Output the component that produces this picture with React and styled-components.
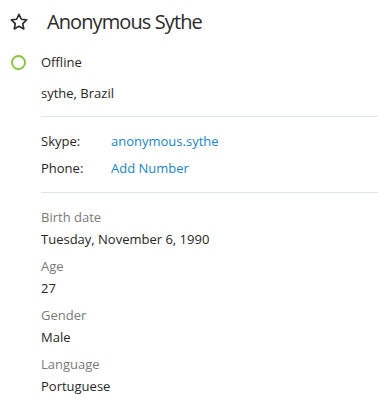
import React from 'react';
import styled, { createGlobalStyle } from 'styled-components';

const GlobalStyle = createGlobalStyle`
  body {
    margin: 0;
    background: #fff;
    font-family: "Open Sans", "Noto Sans", sans-serif;
    color: #262626;
  }
`;

const Panel = styled.div`
  width: 378px;
  height: 418px;
  background: #fff;
  overflow: hidden;
`;

const Header = styled.div`
  display: flex;
  align-items: center;
  height: 44px;
  padding-left: 9px;
`;

const Title = styled.h1`
  margin: 0 0 0 18px;
  font-size: 20px;
  font-weight: 400;
  letter-spacing: -0.9px;
  color: #2b2b2b;
  line-height: 44px;
`;

const StatusRow = styled.div`
  display: flex;
  align-items: center;
  height: 20px;
  margin-top: 8px;
  padding-left: 11px;
`;

const StatusDot = styled.span`
  width: 11px;
  height: 11px;
  border: 2px solid #8cc63f;
  border-radius: 50%;
  margin-right: 15px;
`;

const Body = styled.div`
  padding-left: 41px;
`;

const Text = styled.div`
  font-size: 13px;
  line-height: 20px;
  color: ${p => (p.$muted ? '#7a7a7a' : '#262626')};
  margin-top: ${p => p.$top || 0}px;
`;

const Divider = styled.hr`
  border: none;
  border-top: 1px solid #dbe5ee;
  margin: ${p => p.$top}px 0 0;
`;

const ContactList = styled.div`
  display: grid;
  grid-template-columns: 70px 1fr;
  row-gap: 7px;
  margin-top: 14px;
  font-size: 13px;
  line-height: 20px;
`;

const Link = styled.a`
  color: #1a86c8;
  text-decoration: none;
`;

const Facts = styled.div`
  margin-top: 14px;
  display: flex;
  flex-direction: column;
  gap: 7px;
`;

const Fact = styled.div`
  display: flex;
  flex-direction: column;
  gap: 2px;
`;

function StarIcon() {
  return (
    <svg width="20" height="20" viewBox="0 0 24 24" fill="none" stroke="#2b2b2b" strokeWidth="2" strokeLinejoin="round">
      <path d="M12 2.8l2.8 5.9 6.4.8-4.7 4.4 1.2 6.4L12 17.2l-5.7 3.1 1.2-6.4-4.7-4.4 6.4-.8z" />
    </svg>
  );
}

const facts = [
  ['Birth date', 'Tuesday, November 6, 1990'],
  ['Age', '27'],
  ['Gender', 'Male'],
  ['Language', 'Portuguese'],
];

export default function App() {
  return (
    <Panel>
      <GlobalStyle />
      <Header>
        <StarIcon />
        <Title>Anonymous Sythe</Title>
      </Header>
      <StatusRow>
        <StatusDot />
        <Text>Offline</Text>
      </StatusRow>
      <Body>
        <Text $top={11}>sythe, Brazil</Text>
        <Divider $top={13} />
        <ContactList>
          <span>Skype:</span>
          <Link href="#">anonymous.sythe</Link>
          <span>Phone:</span>
          <Link href="#">Add Number</Link>
        </ContactList>
        <Divider $top={14} />
        <Facts>
          {facts.map(([label, value]) => (
            <Fact key={label}>
              <Text $muted>{label}</Text>
              <Text>{value}</Text>
            </Fact>
          ))}
        </Facts>
      </Body>
    </Panel>
  );
}
